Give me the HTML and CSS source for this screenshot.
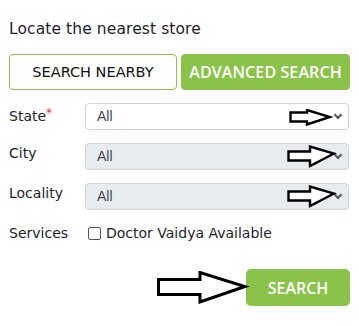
FILE: index.html
```html
<!DOCTYPE html>
<html>
<head>
<meta charset="utf-8">
<link rel="stylesheet" href="styles.css">
</head>
<body>
<div class="panel">
  <h2 class="title">Locate the nearest store</h2>
  <div class="tabs">
    <button class="tab tab-outline">SEARCH NEARBY</button>
    <button class="tab tab-filled">ADVANCED SEARCH</button>
  </div>
  <div class="form">
    <div class="row row-state">
      <label class="label">State<span class="req">*</span></label>
      <div class="select">All<span class="chev"></span>
        <svg class="pointer pointer-state" width="44" height="17" viewBox="0 0 44 17"><polygon points="1.5,3.5 18,3.5 18,1 41,8 18,15.5 18,12.5 1.5,12.5" fill="#fff" stroke="#000" stroke-width="2.4" stroke-linejoin="miter"/></svg>
      </div>
    </div>
    <div class="row">
      <label class="label">City</label>
      <div class="select select-disabled">All<span class="chev"></span>
        <svg class="pointer pointer-other" width="50" height="23" viewBox="0 0 50 23"><polygon points="1.5,6.5 23,6.5 23,1.5 47,8.5 23,21 23,15.5 1.5,15.5" fill="#fff" stroke="#000" stroke-width="2.4"/></svg>
      </div>
    </div>
    <div class="row">
      <label class="label">Locality</label>
      <div class="select select-disabled">All<span class="chev"></span>
        <svg class="pointer pointer-other" width="50" height="23" viewBox="0 0 50 23"><polygon points="1.5,6.5 23,6.5 23,1.5 47,8.5 23,21 23,15.5 1.5,15.5" fill="#fff" stroke="#000" stroke-width="2.4"/></svg>
      </div>
    </div>
    <div class="row row-services">
      <span class="label">Services</span>
      <label class="check"><span class="box"></span>Doctor Vaidya Available</label>
    </div>
  </div>
  <div class="actions">
    <svg class="big-pointer" width="92" height="33" viewBox="0 0 92 33"><polygon points="1.5,8.5 43,8.5 43,1.5 88,15.5 43,31 43,23.5 1.5,23.5" fill="#fff" stroke="#000" stroke-width="3"/></svg>
    <button class="search">SEARCH</button>
  </div>
</div>
</body>
</html>
```
FILE: styles.css
```css
* { box-sizing: border-box; }
body {
  margin: 0;
  background: #fff;
  font-family: "DejaVu Sans", "Open Sans", sans-serif;
  color: #1c1d2b;
}
.panel {
  width: 350px;
  padding: 18px 0 0 9px;
}
.title {
  margin: 0;
  font-size: 15.5px;
  font-weight: 400;
  line-height: 22px;
  height: 22px;
  letter-spacing: 0.1px;
}
.tabs {
  display: flex;
  gap: 4px;
  margin-top: 14px;
}
.tab {
  height: 36px;
  border-radius: 4px;
  font-family: "DejaVu Sans", sans-serif;
  font-size: 14.5px;
  padding: 0;
  cursor: pointer;
}
.tab-outline {
  width: 168px;
  background: #fff;
  border: 1px solid #8bc34a;
  color: #111;
  font-weight: 400;
}
.tab-filled {
  width: 169px;
  background: #8bc34a;
  border: 1px solid #8bc34a;
  color: #fff;
  font-family: "Open Sans", sans-serif;
  font-size: 16px;
  font-weight: 600;
  letter-spacing: 0.1px;
}
.form {
  display: flex;
  flex-direction: column;
  gap: 13px;
  margin-top: 13px;
}
.row {
  display: flex;
  align-items: flex-start;
}
.label {
  width: 76px;
  flex: none;
  font-size: 14px;
  line-height: 20px;
  color: #1c1d2b;
}
.row-state .label { padding-top: 3px; }
.req { color: #e53935; font-size: 12px; vertical-align: top; position: relative; top: -3px; }
.select {
  position: relative;
  width: 264px;
  height: 27px;
  border: 1px solid #ced4da;
  border-radius: 4px;
  background: #fff;
  font-family: "Liberation Sans", Arial, sans-serif;
  font-size: 14px;
  color: #444a55;
  line-height: 25px;
  padding-left: 11px;
}
.select-disabled { background: #e9ecef; }
.chev {
  position: absolute;
  right: 7px;
  top: 8px;
  width: 6px;
  height: 6px;
  border-right: 2px solid #555;
  border-bottom: 2px solid #555;
  transform: rotate(45deg);
}
.pointer { position: absolute; }
.pointer-state { left: 203px; top: 5px; }
.pointer-other { left: 201px; top: 1px; }
.row-services { align-items: center; margin-top: 0; }
.check {
  display: flex;
  align-items: center;
  gap: 5px;
  font-size: 14px;
  line-height: 20px;
  margin-left: 3px;
}
.box {
  width: 13px;
  height: 13px;
  border: 1px solid #555;
  border-radius: 2px;
  background: #fff;
}
.actions {
  display: flex;
  justify-content: flex-end;
  align-items: center;
  margin-top: 26px;
}
.big-pointer { margin-right: -3px; position: relative; z-index: 1; }
.search {
  width: 104px;
  height: 37px;
  background: #8bc34a;
  border: none;
  border-radius: 5px;
  color: #fff;
  font-family: "Open Sans", sans-serif;
  font-size: 16px;
  font-weight: 600;
  padding: 0;
}
```
